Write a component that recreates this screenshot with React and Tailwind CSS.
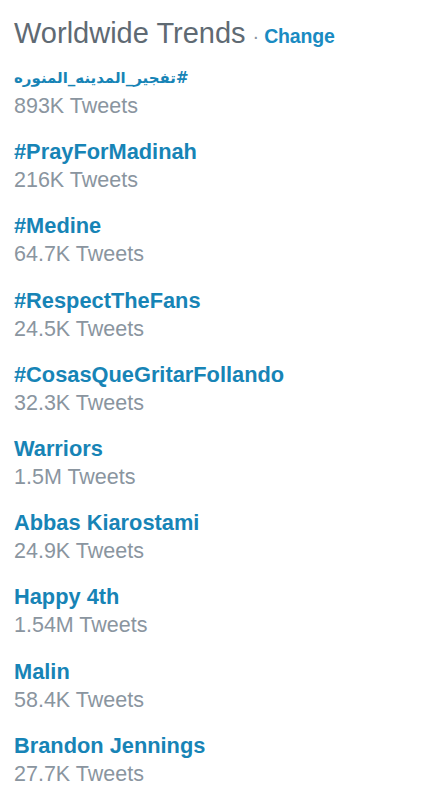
import React from "react";

const trends = [
  { name: "#تفجير_المدينه_المنوره", count: "893K Tweets", rtl: true },
  { name: "#PrayForMadinah", count: "216K Tweets" },
  { name: "#Medine", count: "64.7K Tweets" },
  { name: "#RespectTheFans", count: "24.5K Tweets" },
  { name: "#CosasQueGritarFollando", count: "32.3K Tweets" },
  { name: "Warriors", count: "1.5M Tweets" },
  { name: "Abbas Kiarostami", count: "24.9K Tweets" },
  { name: "Happy 4th", count: "1.54M Tweets" },
  { name: "Malin", count: "58.4K Tweets" },
  { name: "Brandon Jennings", count: "27.7K Tweets" },
];

export default function App() {
  return (
    <div
      className="min-h-[800px] w-[437px] bg-white pl-[14px] pt-[15px]"
      style={{ fontFamily: '"Liberation Sans", Arial, sans-serif' }}
    >
      <div className="flex items-baseline leading-[36px]">
        <span className="text-[29px] text-[#5f6a73]">Worldwide Trends</span>
        <span className="ml-[7px] text-[20px] text-[#8a959f]">·</span>
        <span className="ml-[5px] text-[19.5px] font-semibold tracking-[-0.2px] text-[#1a8bc2]">
          Change
        </span>
      </div>

      <ul className="mt-[10px]">
        {trends.map((t) => (
          <li key={t.name} className="mb-[18.2px]">
            <div
              className="text-[21.8px] font-bold leading-[28px] text-[#1784b6]"
              style={
                t.rtl
                  ? { fontFamily: '"DejaVu Sans", sans-serif', fontSize: "15px" }
                  : undefined
              }
            >
              {t.rtl ? <span dir="rtl">{t.name}</span> : t.name}
            </div>
            <div className="text-[21.5px] leading-[28px] text-[#8a959f]">{t.count}</div>
          </li>
        ))}
      </ul>
    </div>
  );
}
